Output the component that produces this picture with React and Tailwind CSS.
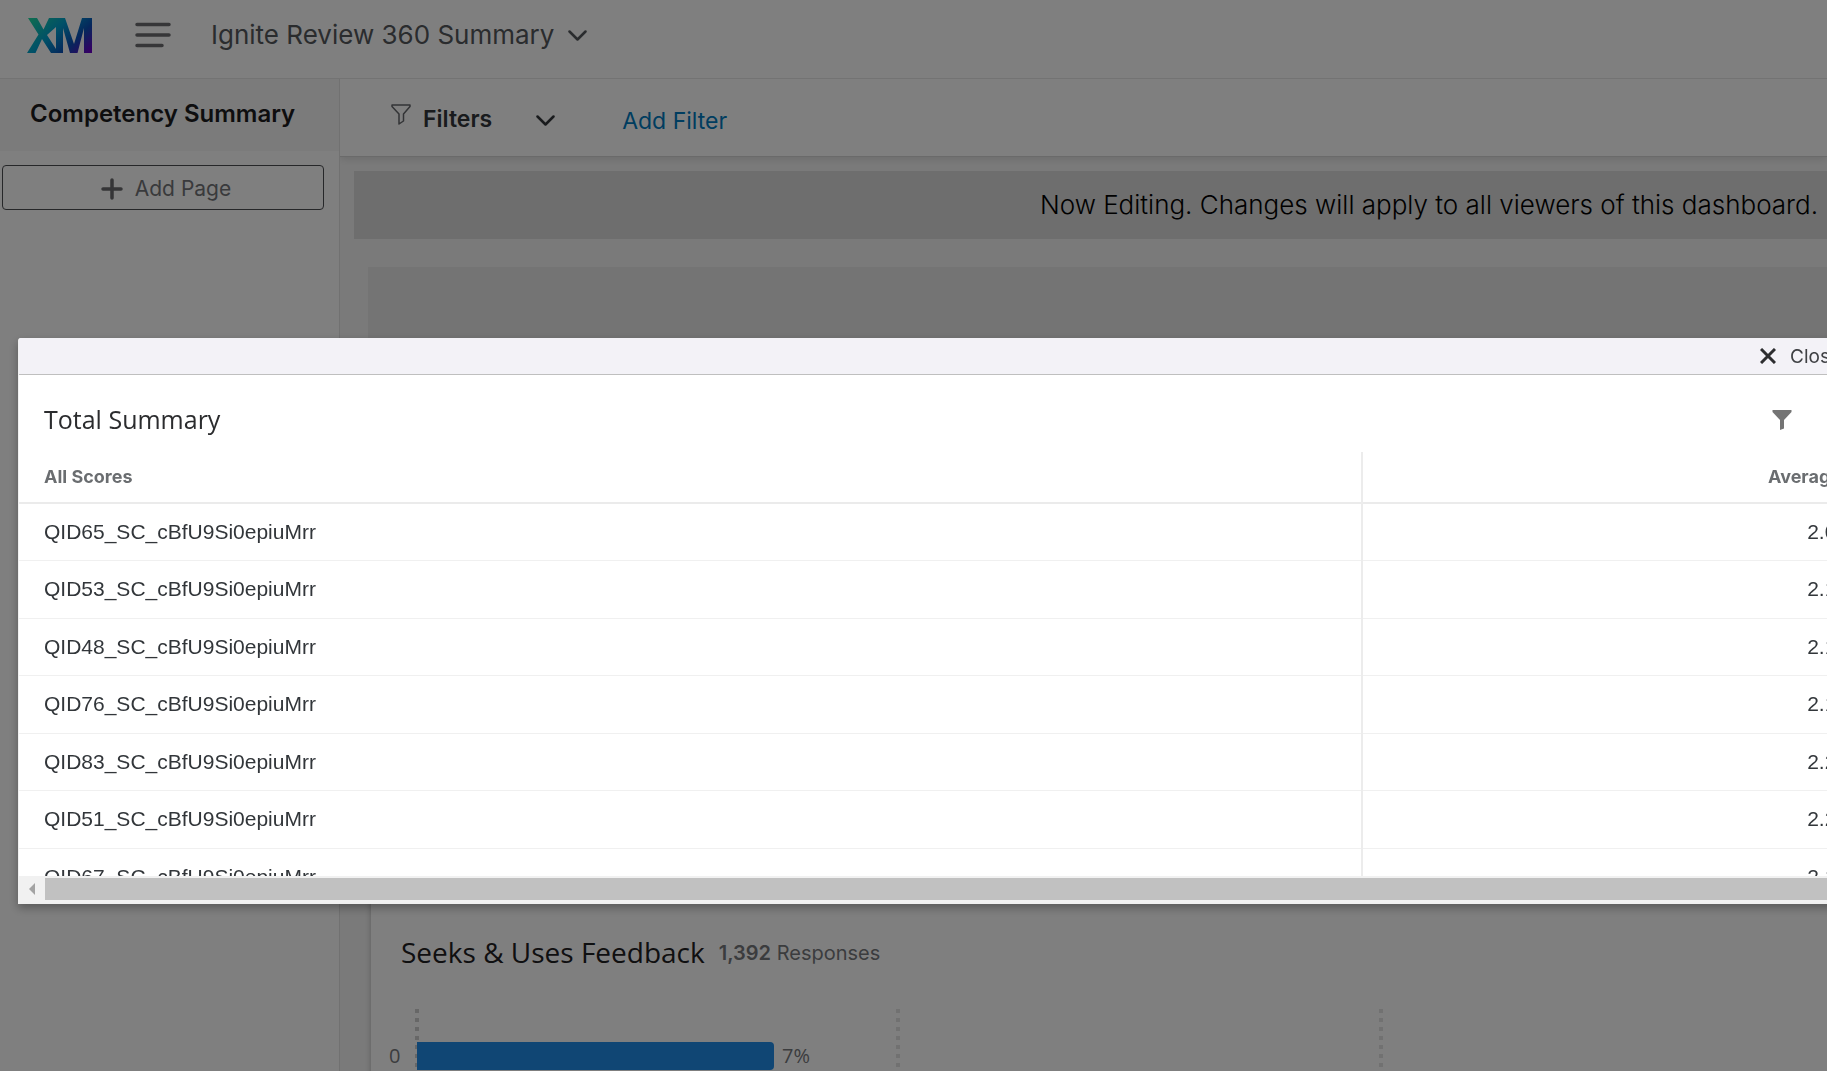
import { useState } from "react";

const scores = [
  { id: "QID65_SC_cBfU9Si0epiuMrr", average: "2.06" },
  { id: "QID53_SC_cBfU9Si0epiuMrr", average: "2.15" },
  { id: "QID48_SC_cBfU9Si0epiuMrr", average: "2.17" },
  { id: "QID76_SC_cBfU9Si0epiuMrr", average: "2.19" },
  { id: "QID83_SC_cBfU9Si0epiuMrr", average: "2.22" },
  { id: "QID51_SC_cBfU9Si0epiuMrr", average: "2.25" },
  { id: "QID67_SC_cBfU9Si0epiuMrr", average: "2.17" },
];

function Logo() {
  return (
    <svg width="65" height="35" viewBox="0 0 65 35" role="img" aria-label="XM">
      <defs>
        <linearGradient id="xm" x1="8" y1="-6" x2="54" y2="42" gradientUnits="userSpaceOnUse">
          <stop offset="0" stopColor="#21dba0" />
          <stop offset="0.42" stopColor="#00a0d0" />
          <stop offset="0.72" stopColor="#0b50b8" />
          <stop offset="1" stopColor="#6a00c8" />
        </linearGradient>
      </defs>
      <path
        fill="url(#xm)"
        d="M1 0H10L16.500 11.500L22 0H38L47 26L55 0H65V35H57V10L50.500 35H43L36 10V35H24L15 21L8.500 35H0L11.500 16.500ZM29 9L20 17L29 31Z"
      />
    </svg>
  );
}

function Chevron() {
  return (
    <svg width="19" height="11" viewBox="0 0 19 11" fill="none" aria-hidden="true"
      stroke="currentColor" strokeWidth="2.500" strokeLinecap="round" strokeLinejoin="round">
      <path d="M1.500 1.500 9.500 9.500l8-8" />
    </svg>
  );
}

function TopBar() {
  return (
    <header className="flex h-[79px] shrink-0 items-start border-b border-[#e6e6e6] bg-white pl-[27px] text-[#55585c]">
      <a href="#home" className="mt-[18px]"><Logo /></a>
      <button className="mt-[22px] ml-[43px]" aria-label="Menu">
        <svg width="36" height="26" viewBox="0 0 36 26" stroke="#6c6d70" strokeWidth="3.500" strokeLinecap="round">
          <path d="M2 2.500h32M2 13h32M2 23.500h25" />
        </svg>
      </button>
      <button className="mt-[18px] ml-10 flex items-center gap-[14px] text-[26px] leading-[34px]">
        Ignite Review 360 Summary
        <Chevron />
      </button>
    </header>
  );
}

function Sidebar() {
  return (
    <aside className="w-[340px] shrink-0 border-r border-[#e2e2e2] bg-white">
      <a href="#competency" className="block h-[72px] bg-[#f6f6f6] pt-5 pl-[30px] text-[24px] leading-[30px] font-semibold text-[#1c1c1e]">
        Competency Summary
      </a>
      <button className="mt-[14px] ml-0.5 flex h-[45px] w-[322px] items-center justify-center gap-3 rounded border border-[#4c4e52] pt-0.5 pl-1.5 text-[21px] text-[#737478]">
        <svg width="22" height="22" viewBox="0 0 22 22" stroke="#6a6b6e" strokeWidth="3.500" strokeLinecap="round" aria-hidden="true">
          <path d="M11 2v18M2 11h18" />
        </svg>
        Add Page
      </button>
    </aside>
  );
}

function FilterBar() {
  return (
    <div className="relative flex h-[78px] items-start border-b border-[#d4d4d4] bg-white pl-[51px] shadow-[0_2px_8px_rgba(0,0,0,0.12)]">
      <button className="mt-[25px] flex items-start text-[23px] leading-[30px] font-semibold text-[#32363a]">
        <svg width="20" height="21" viewBox="0 0 20 21" fill="none" stroke="#66686c" strokeWidth="1.500" strokeLinejoin="round" aria-hidden="true">
          <path d="M1 1h18v1.500l-6.500 7.500v7l-4.500 3v-10L1 2.500z" />
        </svg>
        <span className="ml-3">Filters</span>
        <span className="mt-[11px] ml-[44px]"><Chevron /></span>
      </button>
      <button className="mt-[27px] ml-[67px] text-[23px] leading-[30px] text-[#007ac0]">Add Filter</button>
    </div>
  );
}

function FeedbackCard() {
  return (
    <section className="mt-6 ml-[31px] bg-white pt-[80px] shadow-[0_0_6px_rgba(0,0,0,0.25)]">
      <div className="flex items-center gap-[14px] pl-[30px] leading-10">
        <h2 className="font-['Open_Sans',sans-serif] text-[28px] text-[#1f2022]">Seeks &amp; Uses Feedback</h2>
        <p className="pt-0.5 text-[20px] text-[#77797c]"><b className="font-semibold">1,392</b> Responses</p>
      </div>
      <div className="mt-9 flex font-['Open_Sans',sans-serif] text-[20px] text-[#77797c]">
        <div className="w-[46px] pt-[31px] pl-[18px] leading-8">0</div>
        <div className="relative h-[90px] grow">
          <svg className="absolute top-0 -left-0.5" width="970" height="90" stroke="#e2e2e2" strokeWidth="4" strokeDasharray="4 5" aria-hidden="true">
            <path stroke="#cfcfcf" d="M2 0v90" />
            <path d="M483 0v90M966 0v90" />
          </svg>
          <div className="relative flex items-center gap-2 pt-[33px] leading-7">
            <div className="h-7 w-[357px] rounded-r-sm bg-[#208ce8]" />
            7%
          </div>
        </div>
      </div>
    </section>
  );
}

function SummaryDialog({ onClose }) {
  return (
    <div className="fixed inset-0 flex items-start overflow-hidden bg-black/50 pt-[338px] pl-[18px]">
      <div role="dialog" aria-label="Total Summary"
        className="-mr-10 flex h-[566px] grow flex-col overflow-hidden rounded-t-[3px] border-b-2 border-l border-[#f0f0f0] bg-white shadow-[0_4px_10px_rgba(0,0,0,0.3)]">
        <div className="flex h-[37px] shrink-0 justify-end border-b border-[#bfbfbf] bg-[#f3f2f7] pr-[26px]">
          <button onClick={onClose} className="flex items-center gap-[14px] text-[19px] text-[#3f4144]">
            <svg width="16" height="16" viewBox="0 0 16 16" stroke="#2d2e30" strokeWidth="3" aria-hidden="true">
              <path d="m1 1 14 14M15 1 1 15" />
            </svg>
            <span className="pt-0.5">Close</span>
          </button>
        </div>
        <div className="flex h-[77px] shrink-0 items-start justify-between pt-[26px] pr-[75px] pl-[25px]">
          <h1 className="font-['Open_Sans',sans-serif] text-[25px] leading-9 text-[#2b2c2e]">Total Summary</h1>
          <button className="mt-[9px]" aria-label="Filter">
            <svg width="20" height="20" viewBox="0 0 20 20" fill="#747474" aria-hidden="true">
              <path d="M.500 0h19v2l-7.500 8v8.500L8 20V10L.500 2z" />
            </svg>
          </button>
        </div>
        <div className="min-h-0 grow overflow-hidden">
          <table className="w-full table-fixed border-collapse font-['Liberation_Sans',sans-serif] text-[21px] text-[#32363a]">
            <thead className="font-[Inter,sans-serif] text-[18px] text-[#6a6d70]">
              <tr className="h-[51px] border-b-2 border-[#ebebeb]">
                <th className="w-[1343px] border-r-2 border-[#ececec] pb-0.5 pl-[25px] text-left font-bold">All Scores</th>
                <th className="pr-[26px] pb-0.5 text-right font-bold">Average</th>
              </tr>
            </thead>
            <tbody>
              {scores.map((row) => (
                <tr key={row.id} className="border-b border-[#f0f0f0] odd:h-[57px] even:h-[58px]">
                  <td className="border-r-2 border-[#ececec] pl-[25px]">{row.id}</td>
                  <td className="pr-[19px] text-right">{row.average}</td>
                </tr>
              ))}
            </tbody>
          </table>
        </div>
        <div className="flex h-[26px] shrink-0 items-center bg-[#f1f1f1]">
          <button className="flex w-[26px] justify-center" aria-label="Scroll left">
            <svg width="6" height="12" viewBox="0 0 6 12" fill="#a3a3a3"><path d="M6 0v12L0 6z" /></svg>
          </button>
          <div className="h-[22px] grow bg-[#c1c1c1]" />
        </div>
      </div>
    </div>
  );
}

export default function App() {
  const [open, setOpen] = useState(true);

  return (
    <div className="flex h-screen flex-col overflow-hidden bg-white font-[Inter,sans-serif]">
      <TopBar />
      <div className="flex min-h-0 grow">
        <Sidebar />
        <main className="min-w-0 grow overflow-hidden bg-[#f5f5f5]">
          <FilterBar />
          <div className="mt-[14px] ml-[14px] h-[68px] bg-[#dcdcdc] pr-[9px] text-right text-[26px] leading-[68px] font-light whitespace-nowrap text-black">
            Now Editing. Changes will apply to all viewers of this dashboard.
          </div>
          <div className="mt-7 ml-7 h-[560px] bg-[#e9e9e9]" />
          <FeedbackCard />
        </main>
      </div>
      {open && <SummaryDialog onClose={() => setOpen(false)} />}
    </div>
  );
}
